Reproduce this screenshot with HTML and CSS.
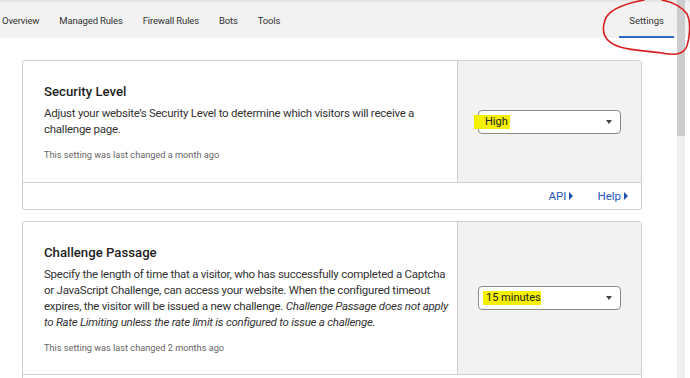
FILE: index.html
```html
<!DOCTYPE html>
<html lang="en">
<head>
    <meta charset="UTF-8">
    <meta name="viewport" content="width=device-width, initial-scale=1.0">
    <title>Firewall Settings</title>
    <link rel="stylesheet" href="styles.css">
</head>
<body>
    <nav class="tabs">
        <a class="tab">Overview</a>
        <a class="tab">Managed Rules</a>
        <a class="tab">Firewall Rules</a>
        <a class="tab">Bots</a>
        <a class="tab">Tools</a>
        <a class="tab tab-active">Settings</a>
    </nav>

    <div class="scrollbar"><div class="scroll-thumb"></div></div>

    <svg class="scribble" width="110" height="60" viewBox="0 0 110 60">
        <path d="M52 0 C36 3 17 8 13 20 C9 32 12 42 28 47 C42 51 58 51 70 53 C80 55 91 56 95 46 C98 36 99 22 95 14 C90 7 80 2 70 0"
              fill="none" stroke="#d81e1e" stroke-width="1.6" stroke-linecap="round"/>
    </svg>

    <main class="content">
        <section class="card">
            <div class="card-main">
                <div class="card-text">
                    <h2>Security Level</h2>
                    <p class="desc">Adjust your website’s Security Level to determine which visitors will receive a challenge page.</p>
                    <p class="meta">This setting was last changed a month ago</p>
                </div>
                <div class="card-control">
                    <div class="select">
                        <span class="mark mark-wide">High</span>
                        <span class="caret"></span>
                    </div>
                </div>
            </div>
            <div class="card-footer">
                <a class="link">API<span class="arrow"></span></a>
                <a class="link">Help<span class="arrow"></span></a>
            </div>
        </section>

        <section class="card">
            <div class="card-main">
                <div class="card-text">
                    <h2>Challenge Passage</h2>
                    <p class="desc">Specify the length of time that a visitor, who has successfully completed a Captcha or JavaScript Challenge, can access your website. When the configured timeout expires, the visitor will be issued a new challenge. <em>Challenge Passage does not apply to Rate Limiting unless the rate limit is configured to issue a challenge.</em></p>
                    <p class="meta">This setting was last changed 2 months ago</p>
                </div>
                <div class="card-control">
                    <div class="select">
                        <span class="mark">15 minutes</span>
                        <span class="caret"></span>
                    </div>
                </div>
            </div>
            <div class="card-footer"></div>
        </section>
    </main>
</body>
</html>
```

FILE: styles.css
```css
* {
    margin: 0;
    padding: 0;
    box-sizing: border-box;
}

body {
    font-family: Roboto, 'Open Sans', sans-serif;
    background: white;
    color: #222;
    overflow: hidden;
}

.tabs {
    display: flex;
    align-items: stretch;
    height: 38px;
    background: #f2f2f2;
    border-top: 2px solid #e6e6e6;
    padding-left: 2px;
    padding-right: 16px;
}

.tab {
    display: flex;
    align-items: center;
    font-size: 9.5px;
    letter-spacing: -0.15px;
    color: #333;
    margin-right: 20px;
}

.tab-active {
    margin-left: auto;
    margin-right: 0;
    padding: 2px 10px 0;
    letter-spacing: 0;
    border-bottom: 2px solid #2e6cc0;
}

.scrollbar {
    position: absolute;
    top: 0;
    left: 677px;
    width: 8px;
    height: 378px;
    background: #efefef;
}

.scroll-thumb {
    height: 136px;
    background: #cdcdcd;
}

.scribble {
    position: absolute;
    top: 0;
    left: 592px;
}

.content {
    padding: 22px 48px 0 22px;
}

.card {
    border: 1px solid #cfcfcf;
    border-radius: 3px;
    margin-bottom: 11px;
    background: white;
}

.card-main {
    display: grid;
    grid-template-columns: 1fr 184px;
    min-height: 121px;
}

.card-text {
    padding: 23px 2px 21px 21px;
}

.card-text h2 {
    font-size: 13.2px;
    font-weight: 500;
    color: #1d1d1d;
    margin-bottom: 6px;
}

.desc {
    font-size: 11.5px;
    letter-spacing: -0.25px;
    line-height: 16px;
    color: #333;
}

.meta {
    font-size: 9.2px;
    color: #666;
    margin-top: 12px;
}

.card-control {
    background: #f2f2f2;
    border-left: 1px solid #cfcfcf;
    display: flex;
    align-items: center;
    padding: 0 20px;
}

.select {
    flex: 1;
    height: 24px;
    background: white;
    border: 1px solid #8a8a8a;
    border-radius: 4px;
    display: flex;
    align-items: center;
    padding: 0 8px 0 4px;
    font-size: 11px;
    color: #222;
}

.mark {
    background: #f4f000;
    padding: 1px 0 1px 3px;
    line-height: 12px;
}

.mark-wide {
    margin-left: -9px;
    padding-left: 11px;
    padding-right: 2px;
}

.caret {
    margin-left: auto;
    width: 0;
    height: 0;
    border-left: 3.5px solid transparent;
    border-right: 3.5px solid transparent;
    border-top: 4px solid #444;
}

.card-footer {
    border-top: 1px solid #cfcfcf;
    height: 27px;
    display: flex;
    align-items: center;
    justify-content: flex-end;
    gap: 24px;
    padding-right: 13px;
}

.link {
    display: flex;
    align-items: center;
    color: #2458b8;
    font-size: 11.5px;
}

.arrow {
    width: 0;
    height: 0;
    margin-left: 3px;
    border-top: 4px solid transparent;
    border-bottom: 4px solid transparent;
    border-left: 4px solid #1f4fa8;
}
```
